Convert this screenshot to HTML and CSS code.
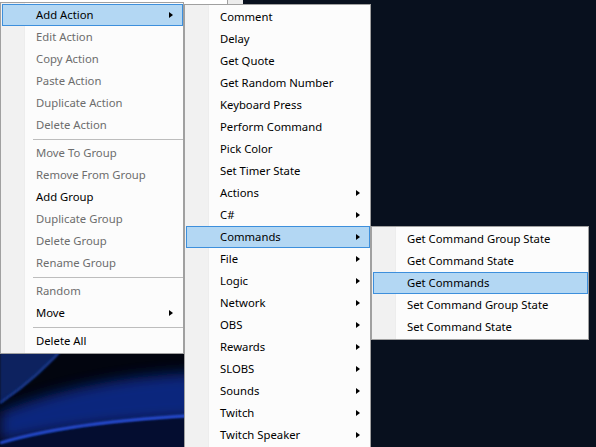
FILE: index.html
```html
<!DOCTYPE html>
<html>
<head>
<meta charset="utf-8">
<link rel="stylesheet" href="styles.css">
</head>
<body>
<div class="desktop">
  <svg class="wallpaper" width="596" height="447" viewBox="0 0 596 447">
    <defs>
      <filter id="soft" x="-20%" y="-20%" width="140%" height="140%"><feGaussianBlur stdDeviation="7"/></filter>
      <filter id="thin" x="-5%" y="-50%" width="110%" height="200%"><feGaussianBlur stdDeviation="0.8"/></filter>
    </defs>
    <rect width="596" height="447" fill="#08101e"/>
    <rect x="0" y="330" width="230" height="117" fill="#02050f"/>
    <path d="M0,330 L80,330 Q45,372 0,404 Z" fill="#0d225e" filter="url(#thin)"/>
    <path d="M70,340 Q40,376 0,403" stroke="#1f409a" stroke-width="2" fill="none" filter="url(#thin)"/>
    <path d="M0,412 Q100,372 230,372 L230,418 Q110,418 0,442 Z" fill="#0d2c8a" opacity="0.9" filter="url(#soft)"/>
    <path d="M0,446 Q80,421 230,416 L230,447 L0,447 Z" fill="#040d30"/>
    <path d="M0,443 Q80,419 230,414" stroke="#2c54e8" stroke-width="2.4" fill="none" filter="url(#thin)"/>
  </svg>

  <div class="appwin"></div>
  <div class="appwin-edge"></div>

  <div class="menu menu-main">
    <div class="item active"><span class="label">Add Action</span><i class="arrow"></i></div>
    <div class="item disabled"><span class="label">Edit Action</span></div>
    <div class="item disabled"><span class="label">Copy Action</span></div>
    <div class="item disabled"><span class="label">Paste Action</span></div>
    <div class="item disabled"><span class="label">Duplicate Action</span></div>
    <div class="item disabled"><span class="label">Delete Action</span></div>
    <div class="sep"></div>
    <div class="item disabled"><span class="label">Move To Group</span></div>
    <div class="item disabled"><span class="label">Remove From Group</span></div>
    <div class="item"><span class="label">Add Group</span></div>
    <div class="item disabled"><span class="label">Duplicate Group</span></div>
    <div class="item disabled"><span class="label">Delete Group</span></div>
    <div class="item disabled"><span class="label">Rename Group</span></div>
    <div class="sep"></div>
    <div class="item disabled"><span class="label">Random</span></div>
    <div class="item"><span class="label">Move</span><i class="arrow"></i></div>
    <div class="sep"></div>
    <div class="item"><span class="label">Delete All</span></div>
  </div>

  <div class="menu menu-sub">
    <div class="item"><span class="label">Comment</span></div>
    <div class="item"><span class="label">Delay</span></div>
    <div class="item"><span class="label">Get Quote</span></div>
    <div class="item"><span class="label">Get Random Number</span></div>
    <div class="item"><span class="label">Keyboard Press</span></div>
    <div class="item"><span class="label">Perform Command</span></div>
    <div class="item"><span class="label">Pick Color</span></div>
    <div class="item"><span class="label">Set Timer State</span></div>
    <div class="item"><span class="label">Actions</span><i class="arrow"></i></div>
    <div class="item"><span class="label">C#</span><i class="arrow"></i></div>
    <div class="item active"><span class="label">Commands</span><i class="arrow"></i></div>
    <div class="item"><span class="label">File</span><i class="arrow"></i></div>
    <div class="item"><span class="label">Logic</span><i class="arrow"></i></div>
    <div class="item"><span class="label">Network</span><i class="arrow"></i></div>
    <div class="item"><span class="label">OBS</span><i class="arrow"></i></div>
    <div class="item"><span class="label">Rewards</span><i class="arrow"></i></div>
    <div class="item"><span class="label">SLOBS</span><i class="arrow"></i></div>
    <div class="item"><span class="label">Sounds</span><i class="arrow"></i></div>
    <div class="item"><span class="label">Twitch</span><i class="arrow"></i></div>
    <div class="item"><span class="label">Twitch Speaker</span><i class="arrow"></i></div>
  </div>

  <div class="menu menu-cmd">
    <div class="item"><span class="label">Get Command Group State</span></div>
    <div class="item"><span class="label">Get Command State</span></div>
    <div class="item active"><span class="label">Get Commands</span></div>
    <div class="item"><span class="label">Set Command Group State</span></div>
    <div class="item"><span class="label">Set Command State</span></div>
  </div>
</div>
</body>
</html>
```
FILE: styles.css
```css
html, body {
  margin: 0;
  padding: 0;
}
body {
  width: 596px;
  height: 447px;
  overflow: hidden;
  background: #08101e;
  font-family: "Segoe UI", "Noto Sans", sans-serif;
  font-size: 11.3px;
  color: #000;
}
.desktop {
  position: relative;
  width: 596px;
  height: 447px;
  overflow: hidden;
}
.wallpaper {
  position: absolute;
  left: 0;
  top: 0;
  display: block;
}
.appwin {
  position: absolute;
  left: 0;
  top: 0;
  width: 227px;
  height: 8px;
  background: #fff;
  border-right: 1px solid #a0a0a0;
}
.appwin-edge {
  position: absolute;
  left: 228px;
  top: 0;
  width: 15px;
  height: 8px;
  background: #ececec;
}
.menu {
  position: absolute;
  box-sizing: border-box;
  border: 1px solid #a0a0a0;
  padding: 1px 0;
  background: linear-gradient(to right, #f1f1f1 0, #f1f1f1 23px, #e9e9e9 24px, #fcfcfc 24px, #fcfcfc 100%);
  display: flex;
  flex-direction: column;
}
.menu-main {
  left: 0;
  top: 2px;
  width: 184px;
}
.menu-sub {
  left: 184px;
  top: 4px;
  width: 187px;
  min-height: 460px;
}
.menu-cmd {
  left: 371px;
  top: 226px;
  width: 218px;
}
.item {
  box-sizing: border-box;
  height: 22px;
  margin-left: 1px;
  border: 1px solid transparent;
  padding: 0 9px 0 33px;
  display: flex;
  align-items: center;
  white-space: nowrap;
}
.item.active {
  background: #b3d7f3;
  border-color: #3d8fdc;
}
.item.disabled {
  color: #6d6d6d;
}
.label {
  line-height: 16px;
}
.arrow {
  margin-left: auto;
  width: 0;
  height: 0;
  border-left: 4px solid #000;
  border-top: 3.5px solid transparent;
  border-bottom: 3.5px solid transparent;
}
.sep {
  height: 6px;
  margin-left: 32px;
  display: flex;
  align-items: center;
}
.sep::before {
  content: "";
  display: block;
  width: 100%;
  height: 1px;
  background: #bdbdbd;
}
```
